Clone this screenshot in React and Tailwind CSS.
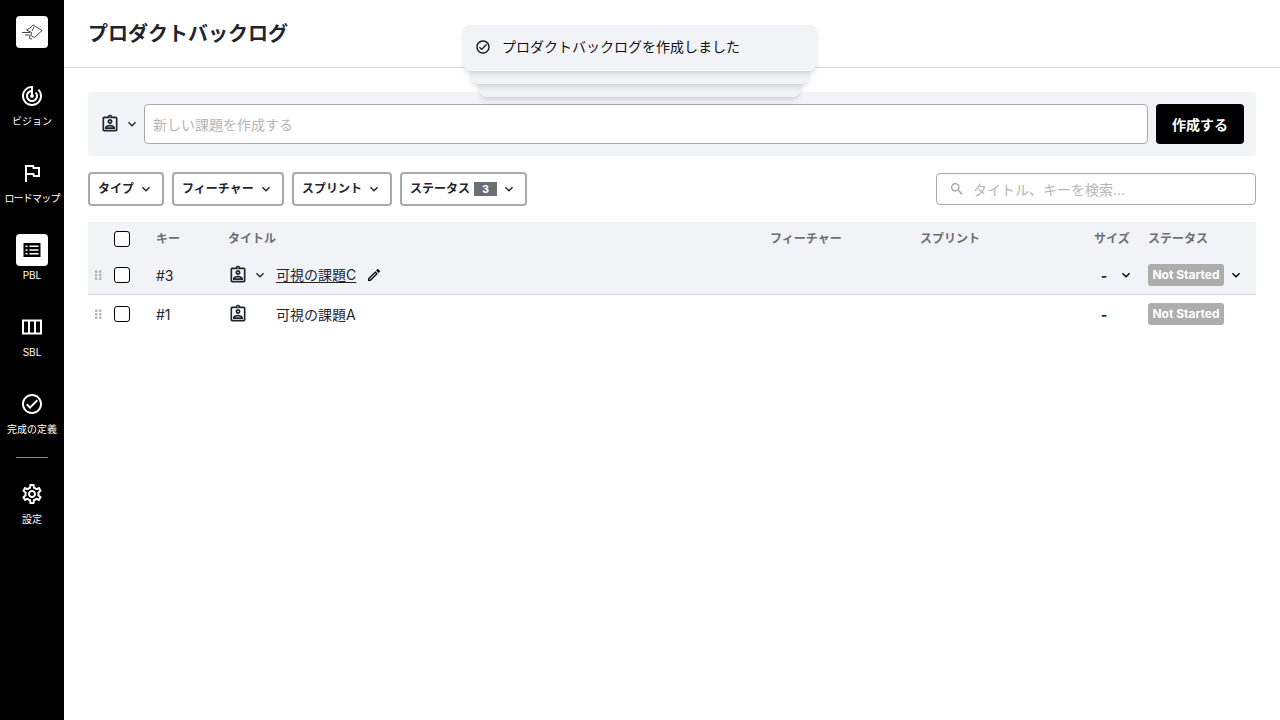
import React from "react";
import {
  MdOutlineAssignmentInd,
  MdKeyboardArrowDown,
  MdOutlineEdit,
  MdSearch,
  MdOutlineTrackChanges,
  MdOutlineFlag,
  MdOutlineCheckCircle,
  MdOutlineSettings,
} from "react-icons/md";

const JP = "font-['Inter','Noto_Sans_CJK_JP',sans-serif]";

const Chev = ({ className = "" }) => <MdKeyboardArrowDown className={"w-4 h-4 shrink-0 " + className} />;

const Grip = () => (
  <svg viewBox="0 0 8 12" className="w-2 h-3 text-[#b4b4b4]" fill="currentColor">
    {[1, 5].map((x) => [1.5, 5, 8.5].map((y) => <rect key={x + "-" + y} x={x - 1} y={y - 1} width="2.4" height="2.4" />))}
  </svg>
);

const Check = () => <div className="w-4 h-4 border border-black rounded-[3px] bg-white shrink-0" />;

const NavItem = ({ icon, label, active, labelClass = "" }) => (
  <div className="flex flex-col items-center">
    <div className={"w-8 h-8 rounded flex items-center justify-center " + (active ? "bg-white text-black" : "text-white")}>{icon}</div>
    <span className={"mt-[2px] text-[10px] leading-[15px] text-white whitespace-nowrap " + labelClass}>{label}</span>
  </div>
);

const Filter = ({ label, badge, className }) => (
  <div className={"h-[34px] border-2 border-[#a9a9a9] rounded flex items-center justify-between pl-2 pr-2 text-xs font-bold text-[#1f2430] " + className}>
    <span className="flex items-center gap-1">
      {label}
      {badge && <span className="w-[23px] h-[14px] bg-[#6b6f73] text-white text-[11px] leading-[14px] text-center">{badge}</span>}
    </span>
    <Chev />
  </div>
);

const Status = () => (
  <span className="w-[76px] h-[22px] bg-[#adadad] rounded-[3px] text-white text-xs font-bold flex items-center justify-center">Not Started</span>
);

const Row = ({ hover, num, title }) => (
  <div className={"flex items-center " + (hover ? "h-[39px] bg-[#f2f3f7] border-b border-[#d8d8d8]" : "h-[38px]")}>
    <div className="w-[26px] flex justify-start pl-[7px] pt-[1px]"><Grip /></div>
    <Check />
    <span className="ml-[26px] w-[72px] text-sm text-[#1f2430] pt-[2px]">{num}</span>
    <div className={"w-12 flex items-center text-[#1f2430] " + (hover ? "" : "-mt-[1px]")}>
      <MdOutlineAssignmentInd className="w-5 h-5 shrink-0" />
      {hover && <Chev className="ml-[4px]" />}
    </div>
    <span className={"text-sm text-[#1f2430] " + (hover ? "underline underline-offset-2" : "pt-[2px]")}>{title}</span>
    {hover && <MdOutlineEdit className="w-4 h-4 ml-[10px] text-black" />}
    <div className="flex-1" />
    <span className="text-sm font-bold text-[#1f2430] w-8 text-center pt-[1px]">-</span>
    <div className="w-[28px]">{hover && <Chev className="-ml-[2px]" />}</div>
    <Status />
    <div className="w-8 pl-1">{hover && <Chev />}</div>
  </div>
);

export default function App() {
  return (
    <div className={"relative flex h-screen w-full overflow-hidden bg-white " + JP}>
      <aside className="w-16 shrink-0 bg-black flex flex-col items-center pt-4">
        <div className="w-8 h-8 bg-white rounded flex items-center justify-center">
          <svg viewBox="0 0 24 24" className="w-6 h-6 text-[#333]" fill="none" stroke="currentColor" strokeWidth="0.9" strokeLinejoin="round">
            <path d="M2 12.5h8M5 15h5M10 8l3-3 9 5.5-7.5 7-3.5-2 .5-3-5-2.5z" />
            <path d="M10 15.5l-.5 3 2.5.5M14 7l-2 4" />
          </svg>
        </div>
        <div className="mt-8 flex flex-col items-center gap-7">
          <NavItem label="ビジョン" icon={<MdOutlineTrackChanges className="w-6 h-6" />} />
          <NavItem label="ロードマップ" labelClass="tracking-[-0.8px]" icon={<MdOutlineFlag className="w-6 h-6" />} />
          <NavItem active label="PBL" icon={
            <svg viewBox="0 0 24 24" className="w-6 h-6" fill="currentColor">
              <path fillRule="evenodd" d="M3.5 5h17v14h-17zM5.5 7.5v1.5h2V7.5zm4 0v1.5h9V7.5zM5.5 11.25v1.5h2v-1.5zm4 0v1.5h9v-1.5zM5.5 15v1.5h2V15zm4 0v1.5h9V15z" />
            </svg>
          } />
          <NavItem label="SBL" icon={
            <svg viewBox="0 0 24 24" className="w-6 h-6" fill="none" stroke="currentColor" strokeWidth="2">
              <rect x="3" y="5.5" width="18" height="13" />
              <path d="M9 5.5v13M15 5.5v13" />
            </svg>
          } />
          <NavItem label="完成の定義" icon={<MdOutlineCheckCircle className="w-6 h-6" />} />
        </div>
        <div className="w-8 h-px bg-[#8a8a8a] mt-5" />
        <div className="mt-5">
          <NavItem label="設定" icon={<MdOutlineSettings className="w-6 h-6" />} />
        </div>
      </aside>

      <main className="flex-1 min-w-0">
        <header className="h-[68px] border-b border-[#d4d4d4] flex items-center px-6">
          <h1 className="text-xl font-bold text-[#1f2430]">プロダクトバックログ</h1>
        </header>

        <div className="px-6 pt-6">
          <div className="h-16 bg-[#f2f3f7] rounded flex items-center pl-3 pr-3">
            <div className="w-[44px] flex items-center text-[#1f2430] shrink-0 gap-1">
              <MdOutlineAssignmentInd className="w-5 h-5 shrink-0" />
              <Chev />
            </div>
            <div className="flex-1 h-10 bg-white border border-[#a9a9a9] rounded flex items-center px-2 pt-[2px] text-sm text-[#b5b5b5]">新しい課題を作成する</div>
            <button className="ml-2 w-[88px] h-10 pt-[2px] bg-black text-white text-sm font-bold rounded">作成する</button>
          </div>

          <div className="flex items-center mt-4 gap-2">
            <Filter label="タイプ" className="w-[76px]" />
            <Filter label="フィーチャー" className="w-[112px]" />
            <Filter label="スプリント" className="w-[100px]" />
            <Filter label="ステータス" badge="3" className="w-[127px]" />
            <div className="flex-1" />
            <div className="w-[320px] h-8 border border-[#a9a9a9] rounded flex items-center pl-3 text-sm text-[#b5b5b5]">
              <MdSearch className="w-4 h-4 mr-2 text-[#a3a3a3]" />
              <span className="pt-[1px]">タイトル、キーを検索...</span>
            </div>
          </div>

          <div className="mt-4">
            <div className="h-[34px] bg-[#f2f3f7] flex items-center text-xs font-bold text-[#6b6f73]">
              <div className="w-[26px]" />
              <Check />
              <span className="ml-[26px] w-[72px]">キー</span>
              <span className="w-[542px]">タイトル</span>
              <span className="w-[150px]">フィーチャー</span>
              <span className="w-[174px]">スプリント</span>
              <span className="w-[54px]">サイズ</span>
              <span>ステータス</span>
            </div>
            <Row hover num="#3" title="可視の課題C" />
            <Row num="#1" title="可視の課題A" />
          </div>
        </div>
      </main>

      <div className="absolute left-[479px] top-[60px] w-[322px] h-[37px] bg-[#f2f3f7] rounded-lg shadow-md" />
      <div className="absolute left-[471px] top-[50px] w-[338px] h-[34px] bg-[#f2f3f7] rounded-lg shadow-md" />
      <div className="absolute left-[463px] top-[25px] w-[354px] h-[46px] bg-[#f2f3f7] rounded-lg shadow-md flex items-center pl-3 pb-[2px] text-sm text-[#111]">
        <MdOutlineCheckCircle className="w-4 h-4 mr-[11px]" />
        プロダクトバックログを作成しました
      </div>
    </div>
  );
}
